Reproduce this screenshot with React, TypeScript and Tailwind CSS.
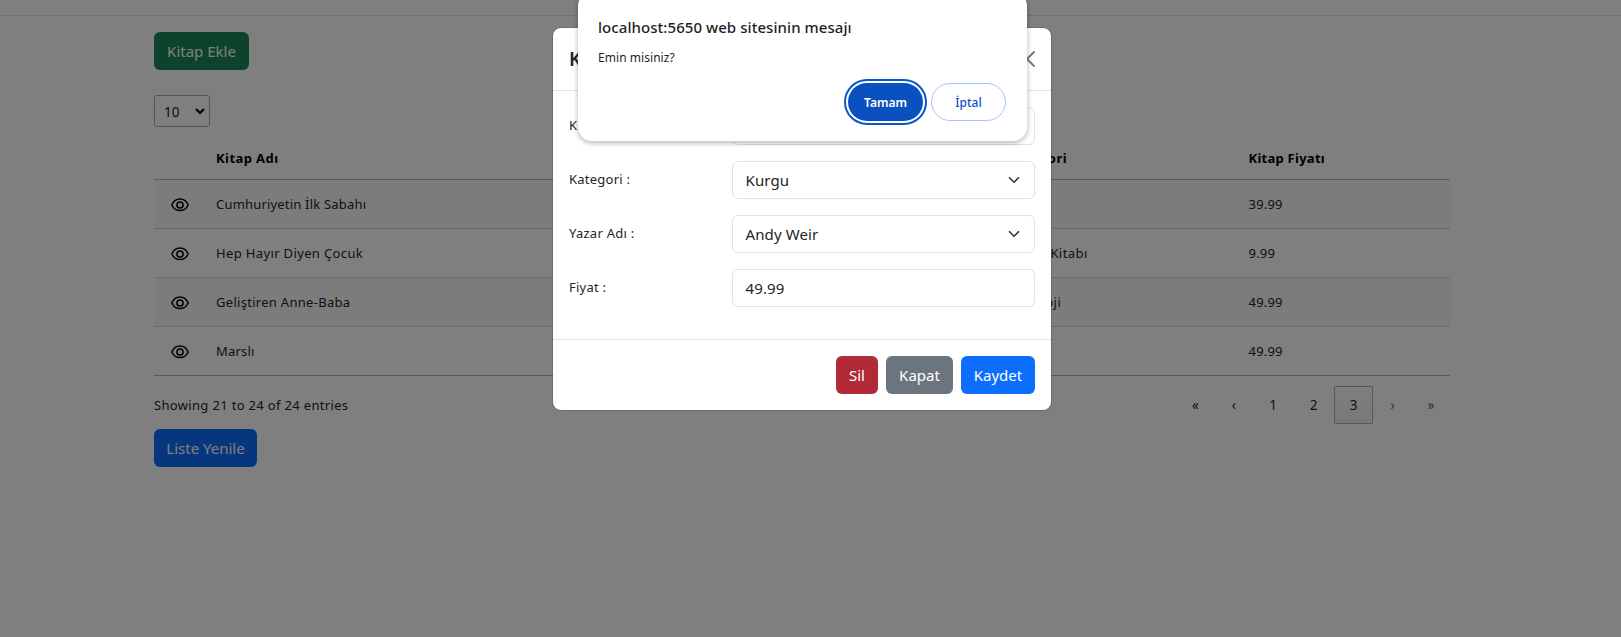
import React from "react";

const books = [
  { name: "Cumhuriyetin İlk Sabahı", nameClass: "tracking-[0.19px]", category: "", price: "39.99" },
  { name: "Hep Hayır Diyen Çocuk", nameClass: "tracking-[0.36px]", category: "Çocuk Kitabı", price: "9.99" },
  { name: "Geliştiren Anne-Baba", nameClass: "tracking-[0.29px]", category: "Psikoloji", price: "49.99" },
  { name: "Marslı", nameClass: "tracking-[0.19px]", category: "", price: "49.99" },
];

function Eye() {
  return (
    <svg width="18" height="14" viewBox="0 0 18 14" fill="none" stroke="#000" strokeWidth="1.500">
      <path d="M.8 7C2.600 3.200 5.500 1.100 9 1.100S15.400 3.200 17.200 7C15.400 10.800 12.500 12.600 9 12.600S2.600 10.800.8 7Z" strokeLinejoin="round" />
      <circle cx="9" cy="7" r="3.100" />
    </svg>
  );
}

function Chevron({ className }: { className?: string }) {
  return (
    <svg viewBox="0 0 16 16" width="12" height="12" className={className} fill="none" stroke="currentColor" strokeWidth="2.200" strokeLinecap="round" strokeLinejoin="round">
      <path d="m2 5 6 6 6-6" />
    </svg>
  );
}

function BookTable() {
  return (
    <div className="text-[13px] tracking-[0.19px]">
      <div className="flex h-[43px] border-b border-black/30 pt-px font-bold text-black">
        <div className="w-[62px]" />
        <div className="flex w-[791px] items-center tracking-[0.430px]">Kitap Adı</div>
        <div className="flex w-[241px] items-center tracking-[0.550px]">Kategori</div>
        <div className="flex items-center pl-[0.5px] tracking-[0.260px]">Kitap Fiyatı</div>
      </div>
      {books.map((book, i) => (
        <div
          key={book.name}
          className={`flex h-[49px] border-b pt-[2px] ${i === 3 ? "border-black/30" : "border-black/15"} ${i % 2 === 0 ? "bg-black/[0.024]" : ""}`}
        >
          <div className="flex w-[62px] items-center pl-[17px]"><Eye /></div>
          <div className={`flex w-[791px] items-center ${book.nameClass}`}>{book.name}</div>
          <div className="flex w-[241px] items-center tracking-[0.450px]">{book.category}</div>
          <div className="flex items-center pl-[0.5px]">{book.price}</div>
        </div>
      ))}
    </div>
  );
}

function Pagination() {
  return (
    <div className="flex h-[38px] items-center text-center text-[13.500px]">
      <span className="w-[38px] pt-px">«</span>
      <span className="w-[38.500px] pt-px">‹</span>
      <span className="w-[40px] pt-px">1</span>
      <span className="w-[41px] pt-px">2</span>
      <span className="flex h-[38px] w-[39px] items-center justify-center rounded-xs border border-black/30 bg-linear-to-b from-black/[0.01] to-black/[0.05] pt-px">3</span>
      <span className="w-[39px] pt-px text-[#666]">›</span>
      <span className="w-[38px] pt-px text-[#666]">»</span>
    </div>
  );
}

function Field({ label, children }: { label: string; children?: React.ReactNode }) {
  return (
    <div className="flex h-[38px]">
      <div className="w-[163px] pt-[9px] text-[13px] leading-[18px] tracking-[0.250px]">{label}</div>
      <div className="flex w-[303px] items-center justify-between rounded-md border border-[#dee2e6] pr-[13px] pl-[12.500px] text-[15px] tracking-[0.120px]">{children}</div>
    </div>
  );
}

function BookModal() {
  return (
    <section className="absolute top-[28px] left-[553px] flex h-[382px] w-[498px] flex-col rounded-lg bg-white outline outline-black/15">
      <header className="flex h-[63px] items-center justify-between border-b border-[#dee2e6] px-4">
        <h5 className="text-[19px] font-semibold">K</h5>
        <svg width="16" height="16" viewBox="0 0 16 16" stroke="#777" strokeWidth="1.800" strokeLinecap="round" className="-mt-px">
          <path d="M1 1l14 14M15 1 1 15" />
        </svg>
      </header>
      <div className="flex h-[248px] flex-col gap-4 px-4 pt-4">
        <Field label="K" />
        <Field label="Kategori :"><span>Kurgu</span><Chevron className="mr-px text-[#343a40]" /></Field>
        <Field label="Yazar Adı :"><span>Andy Weir</span><Chevron className="mr-px text-[#343a40]" /></Field>
        <Field label="Fiyat :"><span>49.99</span></Field>
      </div>
      <footer className="flex flex-1 justify-end gap-2 border-t border-[#dee2e6] px-4 pt-4 text-[15px] text-white">
        <button className="h-[38px] w-[42px] rounded-md bg-[#b02a37]">Sil</button>
        <button className="h-[38px] w-[67px] rounded-md bg-[#6c757d]">Kapat</button>
        <button className="h-[38px] w-[74px] rounded-md bg-[#0d6efd]">Kaydet</button>
      </footer>
    </section>
  );
}

function ConfirmDialog() {
  return (
    <section className="absolute top-[-8px] left-[577.5px] h-[149px] w-[449px] rounded-[14px] bg-white px-[20.500px] pt-[24px] text-[#1f1f1f] shadow-[0_2px_4px_1px_rgba(0,0,0,0.22)]">
      <h2 className="h-[22px] text-[15px] leading-[22px] font-medium tracking-[0.060px] whitespace-nowrap">localhost:5650 web sitesinin mesajı</h2>
      <p className="mt-[11px] h-[18px] text-[12px] leading-[18px] tracking-[0.050px]">Emin misiniz?</p>
      <div className="mt-[16px] flex justify-end gap-2 text-[12px]">
        <button className="h-[38px] w-[75px] rounded-full bg-[#0b50bf] pt-px font-semibold text-white outline-2 outline-offset-2 outline-[#0b57d0]">Tamam</button>
        <button className="h-[38px] w-[75px] rounded-full border border-[#a8c7fa] pt-px font-medium text-[#0b50d0]">İptal</button>
      </div>
    </section>
  );
}

export default function App() {
  return (
    <div className="relative h-[637px] w-[1621px] overflow-hidden bg-white font-['Noto_Sans',sans-serif] text-[#212529]">
      <div className="h-4 border-b border-[#dee2e6]" />
      <main className="ml-[154px] w-[1296px] pt-4">
        <button className="h-[38px] w-[95px] rounded-md bg-[#198754] text-[15px] text-white">Kitap Ekle</button>
        <div className="mt-[25px] mb-[10px] flex h-[32px] w-[56px] items-center justify-between rounded-[3px] border border-[#aaa] pr-1 pl-[9px] text-[13.500px]">
          <span className="pt-[2px]">10</span>
          <svg width="10" height="7" viewBox="0 0 10 7" fill="none" stroke="#000" strokeWidth="2.200"><path d="m1 1 4 4 4-4" /></svg>
        </div>
        <BookTable />
        <div className="mt-[10px] flex items-center justify-between">
          <span className="pt-[2px] text-[13px] tracking-[0.330px]">Showing 21 to 24 of 24 entries</span>
          <Pagination />
        </div>
        <button className="mt-[5px] h-[38px] w-[103px] rounded-md bg-[#0d6efd] text-[15px] text-white">Liste Yenile</button>
      </main>
      <div className="absolute inset-0 bg-black/50" />
      <BookModal />
      <ConfirmDialog />
    </div>
  );
}
